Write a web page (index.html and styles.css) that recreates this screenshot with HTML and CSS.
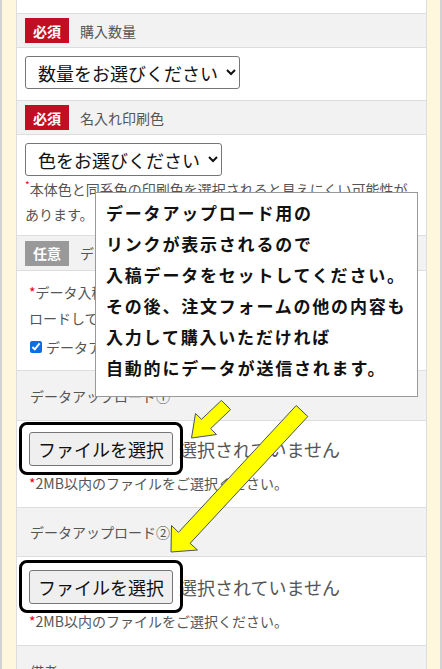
FILE: index.html
```html
<!DOCTYPE html>
<html lang="ja">
<head>
    <meta charset="UTF-8">
    <meta name="viewport" content="width=device-width, initial-scale=1.0">
    <title>ご注文フォーム</title>
    <link rel="stylesheet" href="styles.css">
</head>
<body>
    <div class="page">
        <div class="form">
            <div class="row spacer"></div>

            <div class="head">
                <span class="badge req">必須</span>
                <span class="head-label">購入数量</span>
            </div>
            <div class="row select-row">
                <select class="sel">
                    <option>数量をお選びください</option>
                </select>
            </div>

            <div class="head">
                <span class="badge req">必須</span>
                <span class="head-label">名入れ印刷色</span>
            </div>
            <div class="row select-row color-row">
                <select class="sel">
                    <option>色をお選びください</option>
                </select>
                <p class="note-top"><sup class="mark">*</sup>本体色と同系色の印刷色を選択されると見えにくい可能性があります。</p>
            </div>

            <div class="head head-opt">
                <span class="badge opt">任意</span>
                <span class="head-label">データ入稿</span>
            </div>
            <div class="row text-row">
                <p><span class="mark">*</span>データ入稿をご希望の場合は下記よりデータをアップ<br>ロードしてください。</p>
                <label class="check"><input type="checkbox" checked> データアップロードする</label>
            </div>

            <div class="up-head">データアップロード①</div>
            <div class="row file-row">
                <div class="file-line">
                    <span class="btn-wrap">
                        <button class="file-btn">ファイルを選択</button>
                        <span class="ring"></span>
                    </span>
                    <span class="file-name">選択されていません</span>
                </div>
                <p class="note"><span class="mark">*</span>2MB以内のファイルをご選択ください。</p>
            </div>

            <div class="up-head up-head-2">データアップロード②</div>
            <div class="row file-row file-row-2">
                <div class="file-line">
                    <span class="btn-wrap">
                        <button class="file-btn">ファイルを選択</button>
                        <span class="ring"></span>
                    </span>
                    <span class="file-name">選択されていません</span>
                </div>
                <p class="note"><span class="mark">*</span>2MB以内のファイルをご選択ください。</p>
            </div>

            <div class="up-head">備考</div>
            <div class="row"><textarea class="memo"></textarea></div>

            <!-- 説明の吹き出し -->
            <div class="tip">
                データアップロード用の<br>
                リンクが表示されるので<br>
                入稿データをセットしてください。<br>
                その後、注文フォームの他の内容も<br>
                入力して購入いただければ<br>
                自動的にデータが送信されます。
            </div>
        </div>
    </div>

    <!-- 黄色の矢印 -->
    <svg class="arrows" width="442" height="669" viewBox="0 0 442 669">
        <polygon points="230.6,409.6 210.7,428.5 216.5,434.5 191.5,438 195.5,413.5 201.5,419.3 221.4,400.4"/>
        <polygon points="307.8,416.5 190.1,543.3 197.5,550 171,552 171.5,525.5 178.5,532.3 296.2,405.5"/>
    </svg>
</body>
</html>
```

FILE: styles.css
```css
body {
    margin: 0;
    background-color: #d2d2d2;
    font-family: "Noto Sans CJK JP", "Noto Sans", sans-serif;
    color: #555;
    overflow: hidden;
    position: relative;
}
.page {
    margin: 0 2px;
    padding: 0 13px 0 14px;
    background-color: #fff6de;
    min-height: 669px;
}
.form {
    position: relative;
    background-color: #fff;
    border-left: 1px solid #ddd;
    border-right: 1px solid #ddd;
}
.row {
    border-bottom: 1px solid #ddd;
    box-sizing: border-box;
}
.spacer {
    height: 14px;
}
p {
    margin: 0;
}
.head {
    display: flex;
    align-items: center;
    gap: 11px;
    height: 33px;
    padding: 0 8px;
    background-color: #f2f2f2;
    border-bottom: 1px solid #ddd;
    font-size: 14px;
}
.head-opt {
    height: 34px;
}
.badge {
    width: 44px;
    height: 25px;
    display: flex;
    align-items: center;
    justify-content: center;
    color: #fff;
    font-weight: bold;
    font-size: 14px;
}
.req {
    background-color: #c30d23;
}
.opt {
    background-color: #999;
}
.select-row {
    height: 53px;
    padding: 8px 8px 0;
}
.sel {
    height: 33px;
    font-family: "Noto Sans CJK JP", sans-serif;
    font-size: 18px;
    color: #111;
    padding: 0 5px 0 8px;
    border: 1px solid #767676;
    border-radius: 3px;
    background-color: #fff;
}
.color-row {
    height: 101px;
}
.note-top {
    font-size: 14px;
    line-height: 25px;
    margin-top: 1px;
}
.mark {
    color: #e60012;
}
sup.mark {
    font-size: 10px;
    line-height: 0;
}
.text-row {
    height: 100px;
    padding: 8px 12px 0;
    font-size: 14px;
    line-height: 26px;
}
.check {
    display: flex;
    align-items: center;
    gap: 4px;
    margin-top: 3px;
}
.check input {
    margin: 0 0 0 1px;
    width: 12px;
    height: 12px;
    accent-color: #0a6ee6;
}
.up-head {
    height: 50px;
    padding: 0 13px;
    display: flex;
    align-items: center;
    background-color: #f2f2f2;
    border-bottom: 1px solid #ddd;
    box-sizing: border-box;
    font-size: 14px;
}
.up-head-2 {
    height: 49px;
}
.file-row {
    height: 87px;
    padding: 11px 12px 0;
}
.file-row-2 {
    height: 89px;
    padding-top: 13px;
}
.file-line {
    display: flex;
    align-items: center;
}
.btn-wrap {
    position: relative;
    display: inline-flex;
}
.file-btn {
    height: 34px;
    padding: 0 8px;
    font-family: "Noto Sans CJK JP", sans-serif;
    font-size: 18px;
    color: #111;
    background-color: #efefef;
    border: 1px solid #767676;
    border-radius: 3px;
}
.ring {
    position: absolute;
    top: -10px;
    bottom: -9px;
    left: -10px;
    right: -10px;
    border: 3.5px solid #000;
    border-radius: 8px;
}
.file-name {
    margin-left: 6px;
    font-size: 18px;
    color: #555;
}
.note {
    margin-top: 7px;
    font-size: 14px;
    line-height: 20px;
}
.memo {
    display: block;
    width: 380px;
    height: 80px;
    margin: 12px;
}
.tip {
    position: absolute;
    left: 78px;
    top: 192px;
    width: 311px;
    height: 187px;
    padding: 4px 0 12px 10px;
    background-color: #fff;
    border: 1px solid #999;
    color: #111;
    font-size: 17px;
    font-weight: bold;
    letter-spacing: 1.8px;
    line-height: 31px;
    white-space: nowrap;
}
.arrows {
    position: absolute;
    top: 0;
    left: 0;
    pointer-events: none;
}
.arrows polygon {
    fill: #ffff00;
    stroke: #44546a;
    stroke-width: 1;
    stroke-linejoin: miter;
}
```
